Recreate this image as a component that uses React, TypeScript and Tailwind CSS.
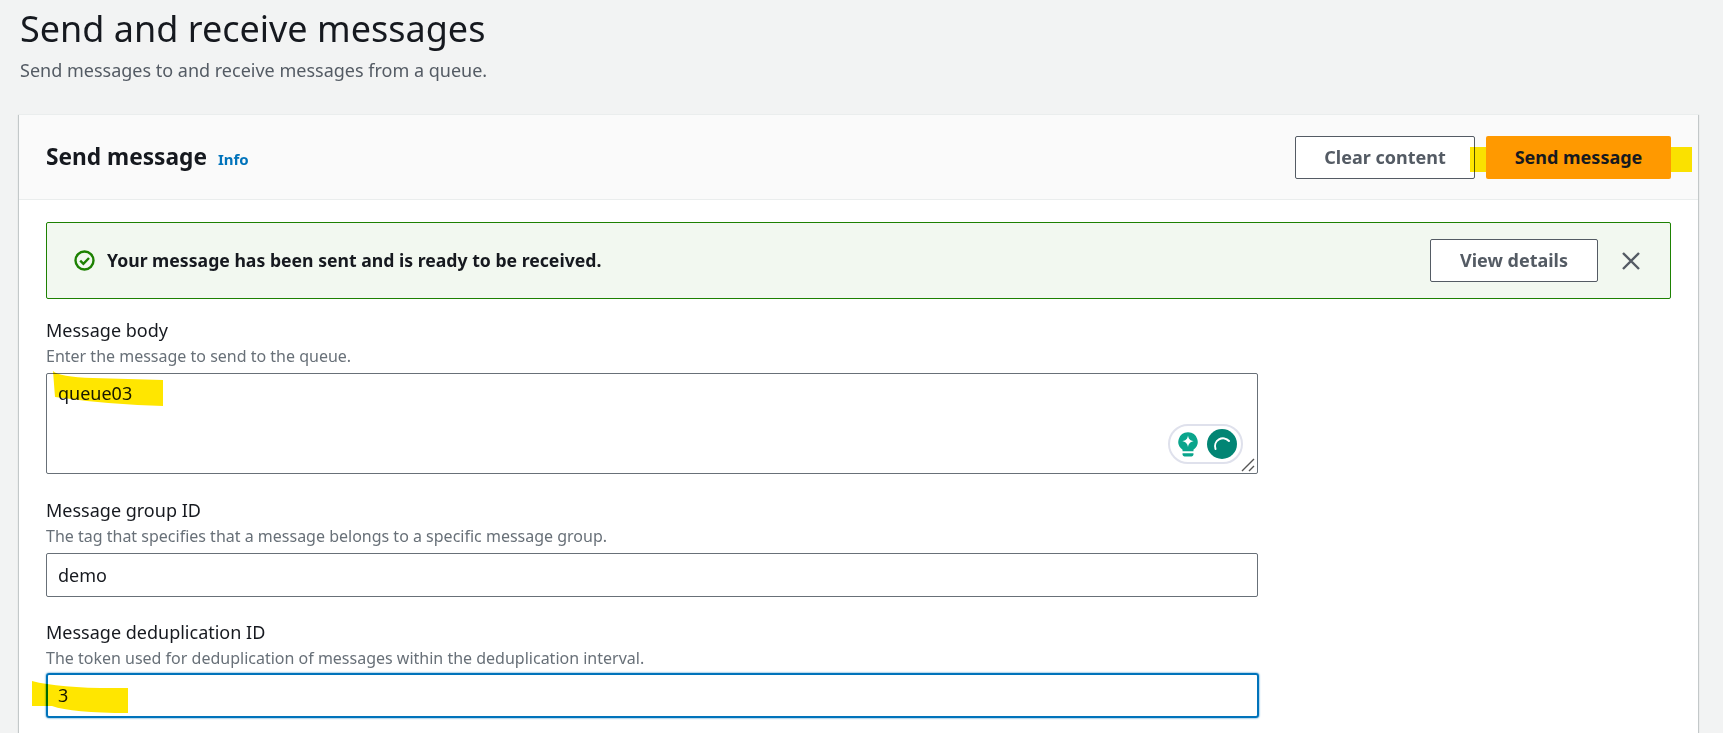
const font = { fontFamily: '"Noto Sans", "Open Sans", sans-serif' };

function FormField({
  label,
  hint,
  children,
}: {
  label: string;
  hint: string;
  children: React.ReactNode;
}) {
  return (
    <div className="w-[1212px]">
      <div className="text-[18px] leading-[22px] text-[#16191f]">{label}</div>
      <div className="mt-[5px] mb-[7px] text-[16px] leading-[20px] text-[#687078]">{hint}</div>
      {children}
    </div>
  );
}

function CheckIcon() {
  return (
    <svg width="21" height="21" viewBox="0 0 21 21" fill="none" stroke="#1d8102" className="shrink-0">
      <circle cx="10.5" cy="10.5" r="9" strokeWidth="2.4" />
      <path d="M6.2 10.6l3.2 3.2 5.6-5.8" strokeWidth="2.4" />
    </svg>
  );
}

function GrammarlyPill() {
  return (
    <div className="absolute left-[1122px] top-[51px] flex h-[40px] w-[75px] items-center gap-[9px] rounded-full border-2 border-[#dfe1ec] bg-white pl-[8px]">
      <svg width="20" height="25" viewBox="0 0 22 27">
        <path d="M11 0a10.5 10.5 0 0 0-6 19.2V21h12v-1.8A10.5 10.5 0 0 0 11 0z" fill="#0aa58c" />
        <path d="M5 23h12v1.6a2 2 0 0 1-2 2H7a2 2 0 0 1-2-2z" fill="#0aa58c" />
        <path d="M11 3.5c.8 4 2 5.2 6.2 6.3-4.2 1-5.4 2.4-6.2 6.5-.8-4.1-2-5.5-6.2-6.5 4.2-1.1 5.4-2.3 6.2-6.3z" fill="#fff" />
      </svg>
      <svg width="30" height="30" viewBox="0 0 30 30" fill="none">
        <circle cx="15" cy="15" r="15" fill="#028574" />
        <path d="M8.5 20a8 8 0 0 1 13.5-8" stroke="#fff" strokeWidth="2" strokeLinecap="round" />
      </svg>
    </div>
  );
}

export default function App() {
  return (
    <div className="h-[733px] overflow-hidden bg-[#f2f3f3] pl-[19px] pr-[25px]" style={font}>
      <div className="h-[114px] pl-[1px]">
        <h1 className="pt-[6px] text-[36px] leading-[46px] text-[#16191f]">Send and receive messages</h1>
        <p className="mt-[6px] text-[18px] leading-[24px] text-[#545b64]">
          Send messages to and receive messages from a queue.
        </p>
      </div>

      <div className="h-[640px] bg-white shadow-[0_1px_1px_0_rgba(0,28,36,0.3),1px_1px_1px_0_rgba(0,28,36,0.15),-1px_1px_1px_0_rgba(0,28,36,0.15)]">
        {/* header */}
        <div className="relative flex h-[86px] items-center justify-between border-y border-[#eaeded] bg-[#fafafa] px-[27px]">
          <div className="flex items-baseline gap-[11px]">
            <h2 className="text-[22.7px] font-bold text-[#16191f]">Send message</h2>
            <span className="text-[15px] font-bold text-[#0073bb]">Info</span>
          </div>
          <div className="flex gap-[11px]">
            <button className="flex h-[43px] w-[180px] items-center justify-center rounded-[2px] border border-[#545b64] bg-white text-[18px] font-bold text-[#545b64]">
              Clear content
            </button>
            <button className="relative z-10 flex h-[43px] w-[185px] items-center justify-center rounded-[2px] bg-[#ff9900] text-[18px] font-bold text-[#16191f]">
              Send message
            </button>
          </div>
          <div className="absolute left-[1451px] top-[32px] h-[25px] w-[222px] bg-[#ffe600] mix-blend-multiply" />
        </div>

        {/* flash */}
        <div className="mx-[27px] mt-[22px] flex h-[77px] w-[1625px] items-center rounded-[2px] border border-[#1d8102] bg-[#f2f8f0] pl-[27px] pr-[30px]">
          <CheckIcon />
          <span className="ml-[12px] text-[17.65px] font-bold text-[#16191f]">
            Your message has been sent and is ready to be received.
          </span>
          <button className="ml-auto flex h-[43px] w-[168px] items-center justify-center rounded-[2px] border border-[#545b64] bg-white text-[18px] font-bold text-[#545b64]">
            View details
          </button>
          <svg width="18" height="18" viewBox="0 0 18 18" className="ml-[24px]" stroke="#545b64" strokeWidth="2.4">
            <path d="M1 1l16 16M17 1L1 17" />
          </svg>
        </div>

        <div className="relative mx-[27px] mt-[20px] flex flex-col">
          <div className="relative">
            <FormField label="Message body" hint="Enter the message to send to the queue.">
              <textarea
                readOnly
                defaultValue="queue03"
                className="block h-[101px] w-[1212px] resize-none rounded-[2px] border border-[#687078] px-[11px] py-[7px] text-[18px] leading-[24px] text-[#16191f] outline-none"
              />
            </FormField>
            <div className="absolute left-0 top-[54px] h-[101px] w-[1212px]">
              <GrammarlyPill />
              <svg className="absolute left-[1195px] top-[85px]" width="14" height="14" stroke="#555" strokeWidth="1.4">
                <path d="M1 13L13 1M8 13l5-5" />
              </svg>
              <svg className="absolute left-[7px] top-[-2px] mix-blend-multiply" width="112" height="36">
                <path d="M0 0 Q6 6 40 7 L110 9 L110 35 Q60 34 2 26z" fill="#ffe600" />
              </svg>
            </div>
          </div>

          <div className="mt-[25px]">
            <FormField
              label="Message group ID"
              hint="The tag that specifies that a message belongs to a specific message group."
            >
              <div className="flex h-[44px] items-center rounded-[2px] border border-[#687078] px-[11px] text-[18px] text-[#16191f]">
                demo
              </div>
            </FormField>
          </div>

          <div className="relative mt-[24px]">
            <FormField
              label="Message deduplication ID"
              hint="The token used for deduplication of messages within the deduplication interval."
            >
              <div className="-mt-[2px] flex h-[45px] w-[1213px] items-center rounded-[3px] border-[2px] border-[#0073bb] px-[10px] text-[18px] text-[#16191f] shadow-[0_0_2px_#0073bb]">
                3
              </div>
            </FormField>
            <svg className="absolute left-[-14px] top-[60px] mix-blend-multiply" width="97" height="33">
              <path d="M0 0 Q30 8 96 7 L96 32 Q40 32 20 25 L0 25z" fill="#ffe600" />
            </svg>
          </div>
        </div>
      </div>
    </div>
  );
}
